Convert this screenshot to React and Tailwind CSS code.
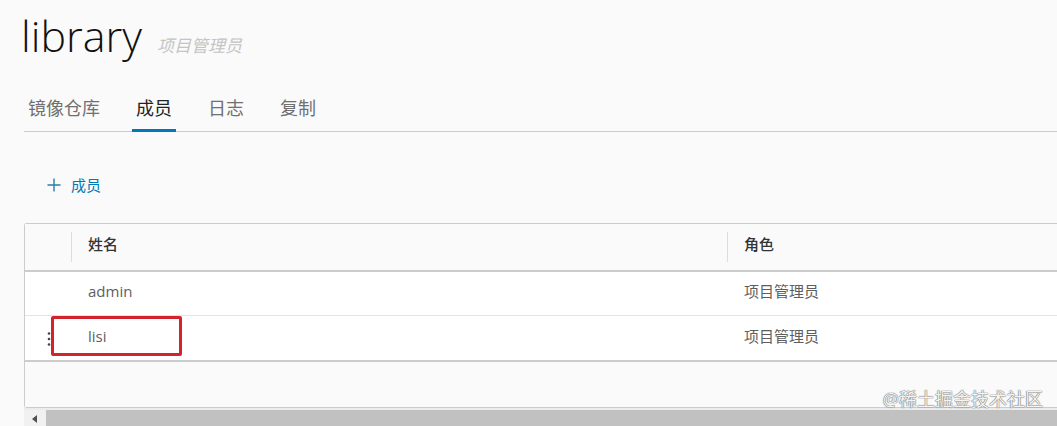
import React from "react";

const FONT = { fontFamily: '"Open Sans", "Noto Sans CJK SC", sans-serif' };

function Tab({ label, active }) {
  return (
    <div
      className={
        "h-[44px] -mb-px px-1 flex items-center border-b-[3px] text-[18px] " +
        (active ? "border-[#0079b8] text-[#222]" : "border-transparent text-[#707070]")
      }
    >
      {label}
    </div>
  );
}

function Row({ name, role, children, last }) {
  return (
    <div className={"relative flex h-[44px] bg-white " + (last ? "" : "border-b border-[#e3e3e3]")}>
      <div className="w-[46px] flex items-center">{children}</div>
      <div className="w-px" />
      <div className="w-[655px] pl-4 pb-[4px] flex items-center text-[15px] text-[#5e5e5e]">{name}</div>
      <div className="w-px" />
      <div className="flex-1 pl-4 pb-[4px] flex items-center text-[15px] text-[#5e5e5e]">{role}</div>
    </div>
  );
}

export default function App() {
  return (
    <div className="w-[1057px] h-[426px] overflow-hidden bg-[#fafafa] relative" style={FONT}>
      {/* Title */}
      <div className="pt-[12px] pl-[21px] flex items-baseline gap-[15px]">
        <span className="text-[43px] leading-[48px] font-light text-[#111]">library</span>
        <span className="text-[17px] italic text-[#c4c4c4]">项目管理员</span>
      </div>

      {/* Tabs */}
      <div className="mt-[28px] ml-[24px] h-[44px] border-b border-[#cccccc] flex gap-7">
        <Tab label="镜像仓库" />
        <Tab label="成员" active />
        <Tab label="日志" />
        <Tab label="复制" />
      </div>

      {/* Add member */}
      <div className="mt-[38px] ml-[46px] h-[30px] flex items-center gap-[9px] text-[#0079b8]">
        <svg width="16" height="16" viewBox="0 0 16 16">
          <path d="M8 1.5v13M1.5 8h13" stroke="#2a7fa8" strokeWidth="1.4" fill="none" />
        </svg>
        <span className="text-[15px]">成员</span>
      </div>

      {/* Table */}
      <div className="mt-[23px] ml-[24px] border-l border-t border-b border-[#cccccc] rounded-tl-[3px] rounded-bl-[3px]">
        {/* Header */}
        <div className="flex h-[48px] bg-[#fafafa] border-b-2 border-[#cccccc] items-center">
          <div className="w-[46px]" />
          <div className="w-px h-[30px] bg-[#dddddd]" />
          <div className="w-[655px] pl-4 pb-[6px] text-[15px] font-medium text-[#333]">姓名</div>
          <div className="w-px h-[30px] bg-[#dddddd]" />
          <div className="flex-1 pl-4 pb-[6px] text-[15px] font-medium text-[#333]">角色</div>
        </div>
        <Row name="admin" role="项目管理员" />
        <Row name="lisi" role="项目管理员" last>
          <svg width="4" height="16" viewBox="0 0 4 16" className="ml-[22px] mt-[2px]">
            <circle cx="2" cy="2.5" r="1.3" fill="#444" />
            <circle cx="2" cy="8" r="1.3" fill="#444" />
            <circle cx="2" cy="13.5" r="1.3" fill="#444" />
          </svg>
          <div className="absolute left-[26px] top-0 w-[131px] h-[40px] border-[3px] border-[#d3242e] rounded-[2px]" />
        </Row>
        {/* Footer */}
        <div className="h-[47px] bg-[#fafafa] border-t-2 border-[#cccccc]" />
      </div>

      {/* Scrollbar */}
      <div className="ml-[24px] h-[20px] bg-[#ececec] flex pt-[2px]">
        <div className="w-[22px] flex items-center justify-center bg-[#f1f1f1]">
          <svg width="6" height="8" viewBox="0 0 6 8">
            <path d="M5 0L0 4l5 4z" fill="#505050" />
          </svg>
        </div>
        <div className="flex-1 bg-[#c1c1c1]" />
      </div>

      {/* Watermark */}
      <div
        className="absolute right-[14px] top-[386px] text-[18px] text-[#f4f4f4]"
        style={{ textShadow: "0 0 1px #555, 0 0 1px #555" }}
      >
        @稀土掘金技术社区
      </div>
    </div>
  );
}
